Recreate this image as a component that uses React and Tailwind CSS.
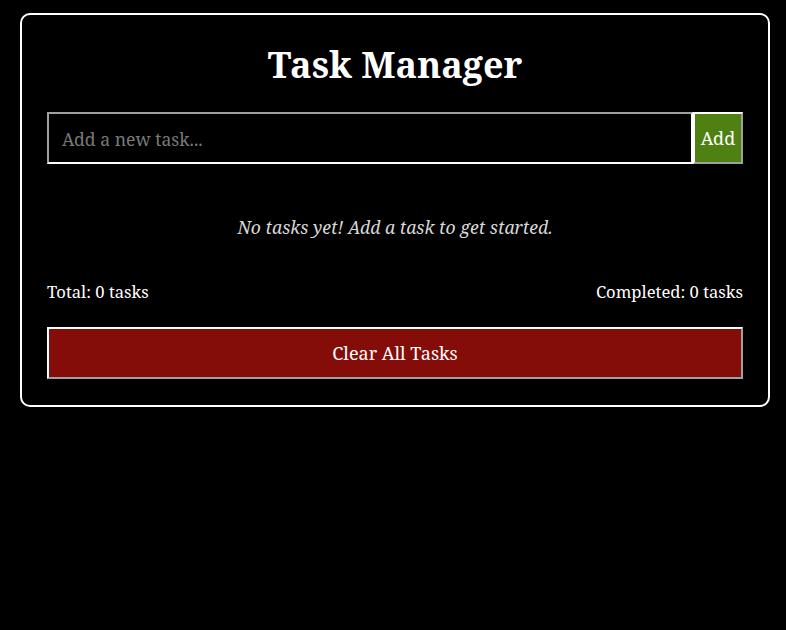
import React, { useState } from 'react';

const serif = { fontFamily: '"Noto Serif", "DejaVu Serif", serif' };

export default function App() {
  const [tasks, setTasks] = useState([]);
  const [text, setText] = useState('');

  const addTask = () => {
    if (!text.trim()) return;
    setTasks([...tasks, { id: Date.now(), text: text.trim(), done: false }]);
    setText('');
  };

  const completed = tasks.filter((t) => t.done).length;

  return (
    <div className="min-h-[630px] bg-black pt-[13px] pl-[20px] text-white" style={serif}>
      <div className="w-[750px] rounded-[10px] border-2 border-white px-[25px] pt-[27px] pb-[26px]">
        {/* title */}
        <h1 className="text-center text-[36px] font-bold leading-[46px]">Task Manager</h1>

        {/* input row */}
        <div className="mt-[24px] flex h-[52px]">
          <input
            value={text}
            onChange={(e) => setText(e.target.value)}
            placeholder="Add a new task..."
            className="h-full flex-1 border-2 border-t-[#a0a0a0] border-l-[#a0a0a0] border-b-white border-r-white bg-black px-[13px] pt-[2px] text-[17.6px] text-white outline-none placeholder:text-[#7a7a7a]"
            style={serif}
          />
          <button
            onClick={addTask}
            className="h-full w-[50px] border-2 border-t-white border-l-white border-b-[#a0a0a0] border-r-[#a0a0a0] bg-[#4e8012] text-[18px] text-white"
          >
            Add
          </button>
        </div>

        {/* list */}
        {tasks.length === 0 ? (
          <p className="pt-[50px] pb-[39px] text-center text-[17.6px] italic leading-[27px] text-[#d8d8d8]">
            No tasks yet! Add a task to get started.
          </p>
        ) : (
          <ul className="py-[20px]">
            {tasks.map((t) => (
              <li key={t.id} className="py-1 text-[16px]">{t.text}</li>
            ))}
          </ul>
        )}

        {/* totals */}
        <div className="flex justify-between text-[16.6px] leading-[24px]">
          <span>Total: {tasks.length} tasks</span>
          <span>Completed: {completed} tasks</span>
        </div>

        {/* clear */}
        <button
          onClick={() => setTasks([])}
          className="mt-[23px] h-[52px] w-full border-2 border-t-white border-l-white border-b-[#a0a0a0] border-r-[#a0a0a0] bg-[#850d09] text-[18px] text-white"
        >
          Clear All Tasks
        </button>
      </div>
    </div>
  );
}
